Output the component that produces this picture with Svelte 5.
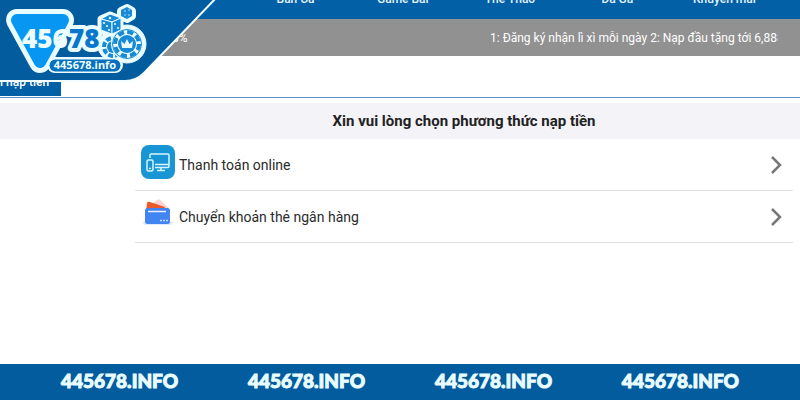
<script>
  const games = ['Bắn Cá', 'Game Bài', 'Thể Thao', 'Đá Gà', 'Khuyến mãi']
  const methods = [
    { id: 'online', name: 'Thanh toán online' },
    { id: 'card', name: 'Chuyển khoản thẻ ngân hàng' }
  ]
  const site = '445678.INFO'
</script>

<div class="page">
  <header>
    <nav>
      {#each games as game}
        <a href="#game">{game}</a>
      {/each}
    </nav>
    <a class="logo" href="#home" aria-label="445678.info">
      <svg viewBox="0 0 216 83" width="216" height="83">
        <path d="M-3 -3H217L144 73Q136 81 125 81H-3Z" fill="#035c9e" stroke="#f2fdff" stroke-width="2" />
        <g stroke-linejoin="round">
          <path d="M17 20H63L40 62Z" fill="#e9fcff" stroke="#e9fcff" stroke-width="22" />
          <g fill="#e9fcff" stroke="#e9fcff">
            <text class="digits" x="69" y="48" stroke-width="8">78</text>
            <path d="M110 15L120 19V30L110 35L101 30V19Z" stroke-width="7" />
            <path d="M127 8L132 11V16L127 19L121 16V11Z" stroke-width="8" />
            <circle cx="127" cy="44" r="19" />
            <circle cx="112" cy="46" r="14" />
            <rect x="47" y="57" width="76" height="16" rx="8" stroke="none" />
          </g>
          <path d="M17 20H63L40 62Z" fill="#0797f2" stroke="#0797f2" stroke-width="12" />
          <text class="digits" x="69" y="48" fill="#e9fcff" stroke="#e9fcff" stroke-width="5">78</text>
          <text class="digits" x="22" y="48" fill="#edfdff">456</text>
          <text class="digits" x="69" y="48" fill="#0876cc">78</text>
        </g>

        <g fill="#1789d5" stroke="#e9fcff" stroke-width="1">
          <path d="M110 14L121 18L112 22L101 19Z" />
          <path d="M101 19L112 22V34L101 30Z" />
          <path d="M112 22L121 18V30L112 34Z" />
          <path d="M127 7L132 10V16L127 19L121 16V10Z" stroke="none" />
        </g>
        <g fill="#e9fcff">
          <circle cx="110" cy="18" r="1.2" />
          <circle cx="104" cy="23" r="1.1" />
          <circle cx="109" cy="30" r="1.1" />
          <circle cx="107" cy="26" r="1.1" />
          <circle cx="115" cy="24" r="1" />
          <circle cx="118" cy="28" r="1" />
          <circle cx="125" cy="11" r=".7" />
          <circle cx="129" cy="10" r=".7" />
          <circle cx="125" cy="15" r=".7" />
          <circle cx="129" cy="15" r=".7" />
        </g>

        <g fill="none">
          <circle cx="113" cy="47" r="9" stroke="#1789d5" stroke-width="4" stroke-dasharray="5 2" />
          <circle cx="113" cy="47" r="6" fill="#1789d5" />
          <circle cx="127" cy="44" r="16" fill="#e9fcff" />
          <circle cx="127" cy="44" r="14.5" stroke="#1789d5" />
          <circle cx="127" cy="44" r="12" stroke="#1789d5" stroke-width="4" stroke-dasharray="6.2 3.2" />
          <circle cx="127" cy="44" r="9" fill="#1789d5" />
        </g>
        <path d="M122 48L121 41L124.5 44L127 39L129.5 44L133 41L132 48Z" fill="#e9fcff" />

        <rect x="49" y="59" width="72" height="13" rx="6.5" fill="#0870bd" stroke="#e9fcff" />
        <text class="domain" x="85" y="69" text-anchor="middle">445678.info</text>
      </svg>
    </a>
  </header>

  <div class="news">
    <span class="percent">8%</span>
    <p>1: Đăng ký nhận lì xì mỗi ngày 2: Nạp đầu tặng tới 6,888</p>
  </div>

  <div class="tabs">
    <button type="button">i nạp tiền</button>
  </div>

  <main>
    <h1>Xin vui lòng chọn phương thức nạp tiền</h1>
    <ul>
      {#each methods as method}
        <li>
          <a href="#{method.id}">
            {#if method.id === 'online'}
              <svg class="icon" viewBox="0 0 34 34">
                <rect width="34" height="34" rx="8" fill="#1795d5" />
                <g fill="none" stroke="#d8f5ff" stroke-width="1.5" stroke-linejoin="round">
                  <path d="M9 13V10Q9 9 10 9H27Q28 9 28 10V21Q28 22.5 27 22.5H14M14 19.5H28M20 22.5V25M16 25.5H24" />
                  <rect x="6" y="15" width="6" height="11" rx="1.5" />
                  <path d="M8 23.5H10" />
                </g>
              </svg>
            {:else}
              <svg class="icon" viewBox="0 0 34 34">
                <path d="M12 6L18 2L28 11H10Z" fill="#fbd3d1" />
                <path d="M6 6Q7 4 9 5L24 10L22 15H5Z" fill="#eb5a2d" />
                <path d="M1 25H33L30 28H4Z" fill="#dfeaff" />
                <rect x="4" y="11" width="25" height="16" rx="2.5" fill="#4384f3" />
                <path d="M7 14.5H25" stroke="#e8f2ff" stroke-width="1.5" />
                <path d="M19 23.5H27" stroke="#c6dcff" stroke-width="1.5" stroke-dasharray="2 1" />
              </svg>
            {/if}
            <span>{method.name}</span>
            <svg class="arrow" viewBox="0 0 12 20">
              <path d="M2 2L10 10L2 18" fill="none" stroke="#777" stroke-width="2.5" />
            </svg>
          </a>
        </li>
      {/each}
    </ul>
  </main>

  <footer>
    {#each [1, 2, 3, 4] as n (n)}
      <a href="#site">{site}</a>
    {/each}
  </footer>
</div>

<style>
  :global(body) {
    margin: 0;
  }

  .page {
    position: relative;
    display: flex;
    flex-direction: column;
    min-height: 100vh;
    overflow: hidden;
    background: #fff;
    color: #2b2b2b;
    font-family: Roboto, sans-serif;
  }

  a {
    color: inherit;
    text-decoration: none;
  }

  /* the menu is scrolled partly out of view */
  nav {
    display: grid;
    grid-template-columns: repeat(5, 1fr);
    align-content: end;
    box-sizing: border-box;
    height: 19px;
    padding: 0 22px 12px 242px;
    overflow: hidden;
    background: #0160a6;
    color: #e3f3ff;
    font-size: 12px;
    font-weight: 500;
    line-height: 16px;
    text-align: center;
  }

  .logo {
    position: absolute;
    top: 0;
    left: 0;
    z-index: 1;
  }

  .logo svg {
    display: block;
  }

  .digits {
    font-family: 'Open Sans', sans-serif;
    font-size: 26px;
    font-weight: 800;
  }

  .domain {
    fill: #edfdff;
    font-family: 'Noto Sans', sans-serif;
    font-size: 11px;
    font-weight: 700;
  }

  .news {
    display: flex;
    align-items: center;
    justify-content: space-between;
    height: 37px;
    padding: 0 22px 0 172px;
    background: #919191;
    color: #fff;
    font-size: 12px;
  }

  .news p {
    width: 288px;
    margin: 0;
    overflow: hidden;
    white-space: nowrap;
  }

  .tabs {
    display: flex;
    align-items: flex-end;
    height: 40px;
    padding-bottom: 1px;
    border-bottom: 1px solid #5f94c6;
  }

  button {
    height: 28px;
    padding: 0 12px 0 0;
    border: 0;
    background: #0160a6;
    color: #fff;
    font: 500 12px/28px Roboto, sans-serif;
  }

  main {
    margin-top: 5px;
  }

  h1 {
    margin: 0;
    padding: 0 7px 0 135px;
    background: #f3f3f8;
    color: #222;
    font-size: 15px;
    font-weight: 700;
    line-height: 36px;
    text-align: center;
  }

  ul {
    margin: 0;
    padding: 0 7px 0 135px;
    list-style: none;
  }

  li {
    border-bottom: 1px solid #dedede;
  }

  li a {
    display: flex;
    align-items: center;
    gap: 4px;
    height: 51px;
    padding: 0 11px 0 6px;
    font-size: 14px;
  }

  .icon {
    width: 34px;
    height: 34px;
    margin-bottom: 6px;
  }

  .arrow {
    width: 12px;
    height: 20px;
    margin-left: auto;
  }

  footer {
    display: flex;
    justify-content: space-between;
    margin-top: auto;
    padding: 0 61px;
    background: #035c9e;
    color: #e9fcff;
    font-family: Lato, sans-serif;
    font-size: 19px;
    font-weight: 900;
    line-height: 34px;
    padding-bottom: 2px;
    -webkit-text-stroke: 1px #e9fcff;
  }
</style>
